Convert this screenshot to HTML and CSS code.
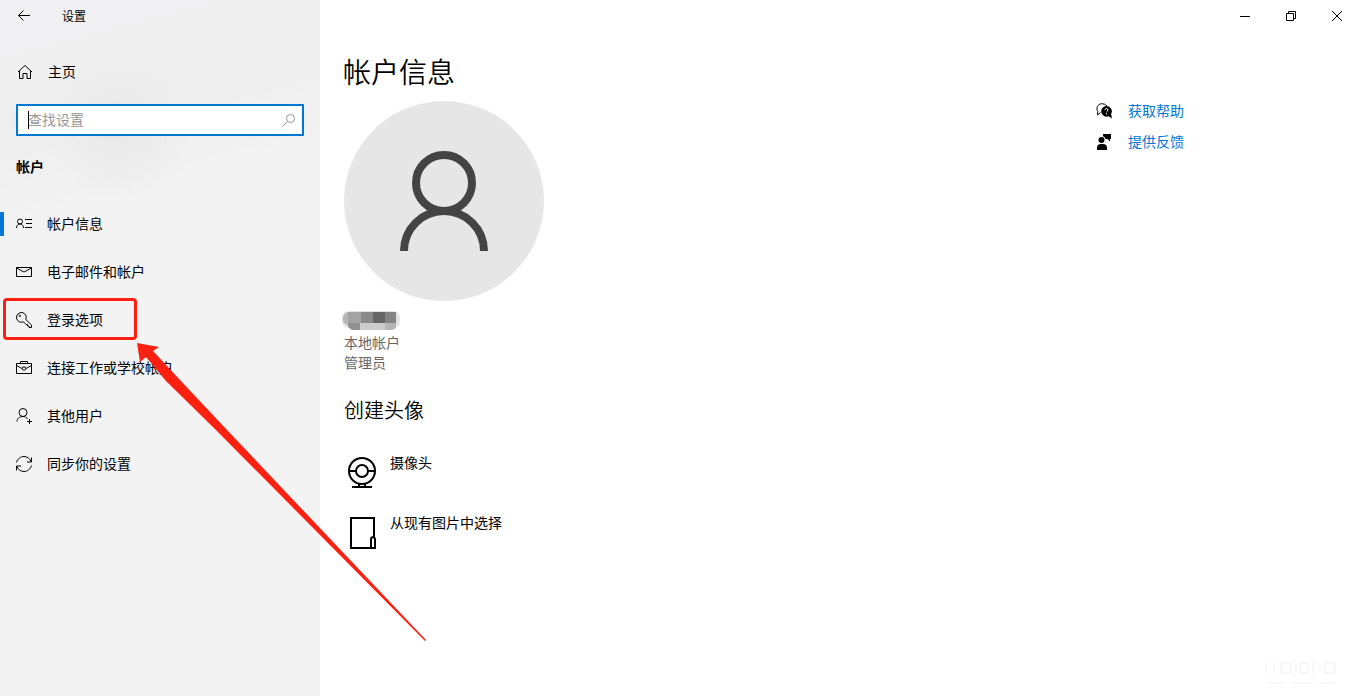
FILE: index.html
```html
<!DOCTYPE html>
<html lang="zh-CN">
<head>
<meta charset="UTF-8">
<meta name="viewport" content="width=device-width, initial-scale=1.0">
<title>设置</title>
<link rel="stylesheet" href="styles.css">
</head>
<body>
    <div class="window">
        <aside class="sidebar">
            <div class="titlebar">
                <button type="button" class="back" aria-label="返回">
                    <svg width="16" height="16" viewBox="0 0 16 16"><path d="M14 7.5H2.5M7.5 2.5l-5 5 5 5"/></svg>
                </button>
                <span class="title">设置</span>
            </div>

            <a href="#" class="nav-link home">
                <svg width="16" height="16" viewBox="0 0 16 16"><path d="M1 8l7-6.500L15 8M2.500 7v7.500h3.500v-5h4v5h3.500V7"/></svg>
                <span>主页</span>
            </a>

            <form class="search">
                <span class="caret"></span>
                <input type="text" id="search" placeholder="查找设置" aria-label="查找设置">
                <button type="button" aria-label="搜索">
                    <svg width="14" height="14" viewBox="0 0 14 14"><circle cx="8.500" cy="5.500" r="4"/><path d="M5.500 8.500l-5 5"/></svg>
                </button>
            </form>

            <h3>帐户</h3>

            <nav>
                <a href="#" class="nav-link active">
                    <svg width="16" height="16" viewBox="0 0 16 16"><circle cx="4" cy="5.500" r="2.500"/><path d="M.5 12c0-2.500 1.500-4 3.500-4s3.500 1.500 3.500 4M9 3.500h7M10 7.500h6M9 11.500h7"/></svg>
                    <span>帐户信息</span>
                </a>
                <a href="#" class="nav-link">
                    <svg width="16" height="16" viewBox="0 0 16 16"><path d="M.5 3.500h15v9H.5zM.5 4L8 8l7.500-4"/></svg>
                    <span>电子邮件和帐户</span>
                </a>
                <a href="#" class="nav-link marked">
                    <svg width="16" height="16" viewBox="0 0 16 16"><path d="M9.800 7.500l5.700 5.500v2.500h-2.500v-1.500h-1.500v-1.500h-1.500L7.500 9.800A4.900 4.900 0 1 1 9.800 7.500z"/><circle cx="3.800" cy="3.800" r=".7"/></svg>
                    <span>登录选项</span>
                </a>
                <a href="#" class="nav-link">
                    <svg width="16" height="16" viewBox="0 0 16 16"><path d="M.5 3.500h15v10H.5zM4.500 3.500v-2h7v2M.5 5.500l5.500 3M15.500 5.500l-5.500 3"/><circle cx="8" cy="8.500" r="1.700"/></svg>
                    <span>连接工作或学校帐户</span>
                </a>
                <a href="#" class="nav-link">
                    <svg width="16" height="16" viewBox="0 0 16 16"><circle cx="7" cy="4.500" r="4"/><path d="M1 13.500c0-3 2.500-5 6-5 2 0 3.500.8 4.500 2.500M13.500 11v5M11 13.500h5"/></svg>
                    <span>其他用户</span>
                </a>
                <a href="#" class="nav-link">
                    <svg width="16" height="16" viewBox="0 0 16 16"><path d="M.5 6.500C1.500 3 4.500.5 8 .5c3 0 6 2 7 5M15.500 1.500v4.500h-4.500M15.500 9.500c-1 3.500-4 6-7.500 6-3 0-6-2-7-5M.5 14.500V10H5"/></svg>
                    <span>同步你的设置</span>
                </a>
            </nav>
        </aside>

        <main>
            <div class="controls">
                <button type="button" aria-label="最小化"><svg width="12" height="12" viewBox="0 0 12 12"><path d="M1 6.500h10"/></svg></button>
                <button type="button" aria-label="还原"><svg width="12" height="12" viewBox="0 0 12 12"><path d="M1.500 3.500h7v7h-7zM3.500 3.500v-2h7v7h-2"/></svg></button>
                <button type="button" aria-label="关闭"><svg width="12" height="12" viewBox="0 0 12 12"><path d="M1 1l10 10M11 1L1 11"/></svg></button>
            </div>

            <div class="content">
                <section class="account">
                    <h1>帐户信息</h1>
                    <svg class="avatar" width="200" height="200" viewBox="0 0 200 200">
                        <circle cx="100" cy="100" r="100" fill="#e6e6e6"/>
                        <g fill="none" stroke="#444" stroke-width="8">
                            <circle cx="100" cy="82" r="28"/>
                            <path d="M60 150a40 40 0 0 1 80 0"/>
                        </g>
                    </svg>
                    <!-- blurred user name -->
                    <svg class="username" width="60" height="21" viewBox="0 0 60 21">
                        <rect width="58" height="17" rx="7" fill="#e4e4e4"/>
                        <path fill="#b5b5b5" d="M1 6q1-4 5-5v13q-5-1-5-5z"/>
                        <path fill="#a3a3a3" d="M6 1h13v11H6z"/>
                        <path fill="#8a8a8a" d="M19 1h12v11H19z"/>
                        <path fill="#666" d="M31 1h12v11H31z"/>
                        <path fill="#858585" d="M43 1h11v11H43z"/>
                        <path fill="#909090" d="M6 12h12v7H11q-4-1-5-4z"/>
                        <path fill="#ccc" d="M18 12h25v7H18z"/>
                        <path fill="#b5b5b5" d="M43 12h11v5q-2 2-5 2h-6z"/>
                    </svg>
                    <p>本地帐户</p>
                    <p>管理员</p>

                    <h2>创建头像</h2>
                    <button type="button" class="option">
                        <svg width="36" height="36" viewBox="0 0 36 36"><circle cx="18" cy="16" r="13"/><circle cx="18" cy="16" r="6"/><path d="M5 16h7M24 16h7M15 28.500v4M21 28.500v4M8 32h20"/></svg>
                        <span>摄像头</span>
                    </button>
                    <button type="button" class="option">
                        <svg width="36" height="36" viewBox="0 0 36 36"><path d="M27 33H7V3h23v20M27 33V25q0-3 2-3t2 3v8z"/></svg>
                        <span>从现有图片中选择</span>
                    </button>
                </section>

                <section class="help">
                    <a href="#">
                        <svg width="16" height="16" viewBox="0 0 16 16"><path fill="none" stroke="#000" d="M4.500 9.500L1.500 12l.3-3.500A5 5 0 0 1 5.500 .7Q9 .5 11 3"/><path d="M10.500 3a5.300 5.300 0 0 1 4.600 8l.9 4.500-3.500-2.300A5.300 5.300 0 1 1 10.500 3z"/><path fill="none" stroke="#fff" d="M9 7q0-1.500 1.500-1.500T12 7q0 1-1.500 2M10.500 10.200v1.200"/></svg>
                        <span>获取帮助</span>
                    </a>
                    <a href="#">
                        <svg width="16" height="16" viewBox="0 0 16 16"><circle cx="5.500" cy="6" r="3"/><path d="M1 16v-2q0-4 4-4h2q4 0 4 4v2zM7 0h8v5h-1v2.500L11.500 5H9.500q-.5-2-2.500-2.700z"/></svg>
                        <span>提供反馈</span>
                    </a>
                </section>
            </div>
        </main>

        <!-- pointer to the sign-in options -->
        <svg class="arrow" width="300" height="300" viewBox="0 0 300 300"><path d="M1 2l22 4-6 4 27 29 47 50L290 299l-1 1L80 89 30 40 10 16l-6 5z"/></svg>

        <svg class="stamp" width="72" height="28" viewBox="0 0 72 28"><path d="M1 2v12M9 2v12M16 3h10v10H16zM31 2v12M35 3h8v10h-8zM48 2v12M52 3l6 10M60 3h10v10H60zM2 23h18M26 23h22M54 23h16"/></svg>
    </div>
</body>
</html>
```
FILE: styles.css
```css
*,
*::before,
*::after {
    box-sizing: border-box;
}

body {
    margin: 0;
    font-family: "Noto Sans CJK SC", sans-serif;
    font-size: 14px;
    line-height: 20px;
    color: #000;
    background: #fff;
}

h1, h2, h3, p {
    margin: 0;
}

svg {
    flex: none;
    display: block;
}

a {
    color: inherit;
    text-decoration: none;
}

button {
    padding: 0;
    border: none;
    background: none;
    font: inherit;
    color: inherit;
    cursor: pointer;
}

.window {
    position: relative;
    display: flex;
    min-height: 100vh;
    overflow: hidden;
}

/* sidebar */
.sidebar {
    width: 320px;
    flex: none;
    background: radial-gradient(circle at 120px 130px, #e8e8e9 0, rgba(232, 232, 233, 0) 70px),
        linear-gradient(165deg, #f1f1f4 0, #eee 16%, #f3f3f3 32%, #f3f3f3 100%);
}

.titlebar {
    display: flex;
    align-items: center;
    height: 32px;
    padding-left: 16px;
    font-size: 12px;
}

.title {
    margin-left: 30px;
}

.sidebar svg,
.controls svg {
    fill: none;
    stroke: #000;
    stroke-width: 1;
}

.nav-link {
    position: relative;
    display: flex;
    align-items: center;
    gap: 15px;
    height: 48px;
    padding-left: 16px;
}

.nav-link span,
.help span {
    padding-bottom: 2px;
}

.home {
    margin-top: 16px;
    padding-left: 17px;
}

.search {
    display: flex;
    align-items: center;
    height: 32px;
    margin: 8px 16px 20px;
    padding: 0 6px 0 10px;
    border: 2px solid #0078d7;
    background: #fff;
}

.search input {
    flex: 1;
    min-width: 0;
    padding: 0 0 2px;
    border: none;
    outline: none;
    background: none;
    font: inherit;
}

.search input::placeholder {
    color: #999;
    opacity: 1;
}

.search .caret {
    width: 1px;
    height: 18px;
    margin-right: -1px;
    background: #000;
}

.search svg {
    stroke: #999;
}

h3 {
    padding-left: 16px;
    font-size: 14px;
    font-weight: bold;
}

nav {
    margin-top: 24px;
}

.active::before {
    content: "";
    position: absolute;
    left: 0;
    top: 12px;
    width: 4px;
    height: 24px;
    background: #0078d7;
}

.marked::after {
    content: "";
    position: absolute;
    left: 3px;
    top: 2px;
    width: 134px;
    height: 42px;
    border: 3px solid #fc2010;
    border-radius: 4px;
}

/* main */
main {
    flex: 1;
    min-width: 0;
}

.controls {
    display: flex;
    justify-content: flex-end;
    height: 32px;
    margin-right: -15px;
}

.controls button {
    display: flex;
    align-items: center;
    justify-content: center;
    width: 46px;
}

.content {
    display: flex;
    justify-content: space-between;
    padding: 19px 161px 0 24px;
}

h1 {
    margin-left: -1px;
    font-size: 28px;
    font-weight: 350;
    line-height: 40px;
}

.avatar {
    margin-top: 10px;
}

.username {
    margin: 10px 0 0 -2px;
}

.account p {
    color: #666;
}

h2 {
    margin: 26px 0 33px;
    font-size: 20px;
    font-weight: 350;
    line-height: 24px;
}

.option {
    display: flex;
    align-items: flex-start;
    gap: 10px;
    height: 60px;
    text-align: left;
}

.option svg {
    fill: none;
    stroke: #000;
    stroke-width: 2;
}

.option span {
    margin-top: -3px;
}

.help {
    display: flex;
    flex-direction: column;
    gap: 9px;
    padding-top: 49px;
    color: #0078d7;
}

.help a {
    display: flex;
    align-items: center;
    gap: 16px;
}

.arrow {
    position: absolute;
    left: 136px;
    top: 341px;
    fill: #fc2010;
    pointer-events: none;
}

.stamp {
    position: absolute;
    right: 8px;
    bottom: 8px;
    fill: none;
    stroke: #f7f7f7;
    stroke-width: 2;
}
```
